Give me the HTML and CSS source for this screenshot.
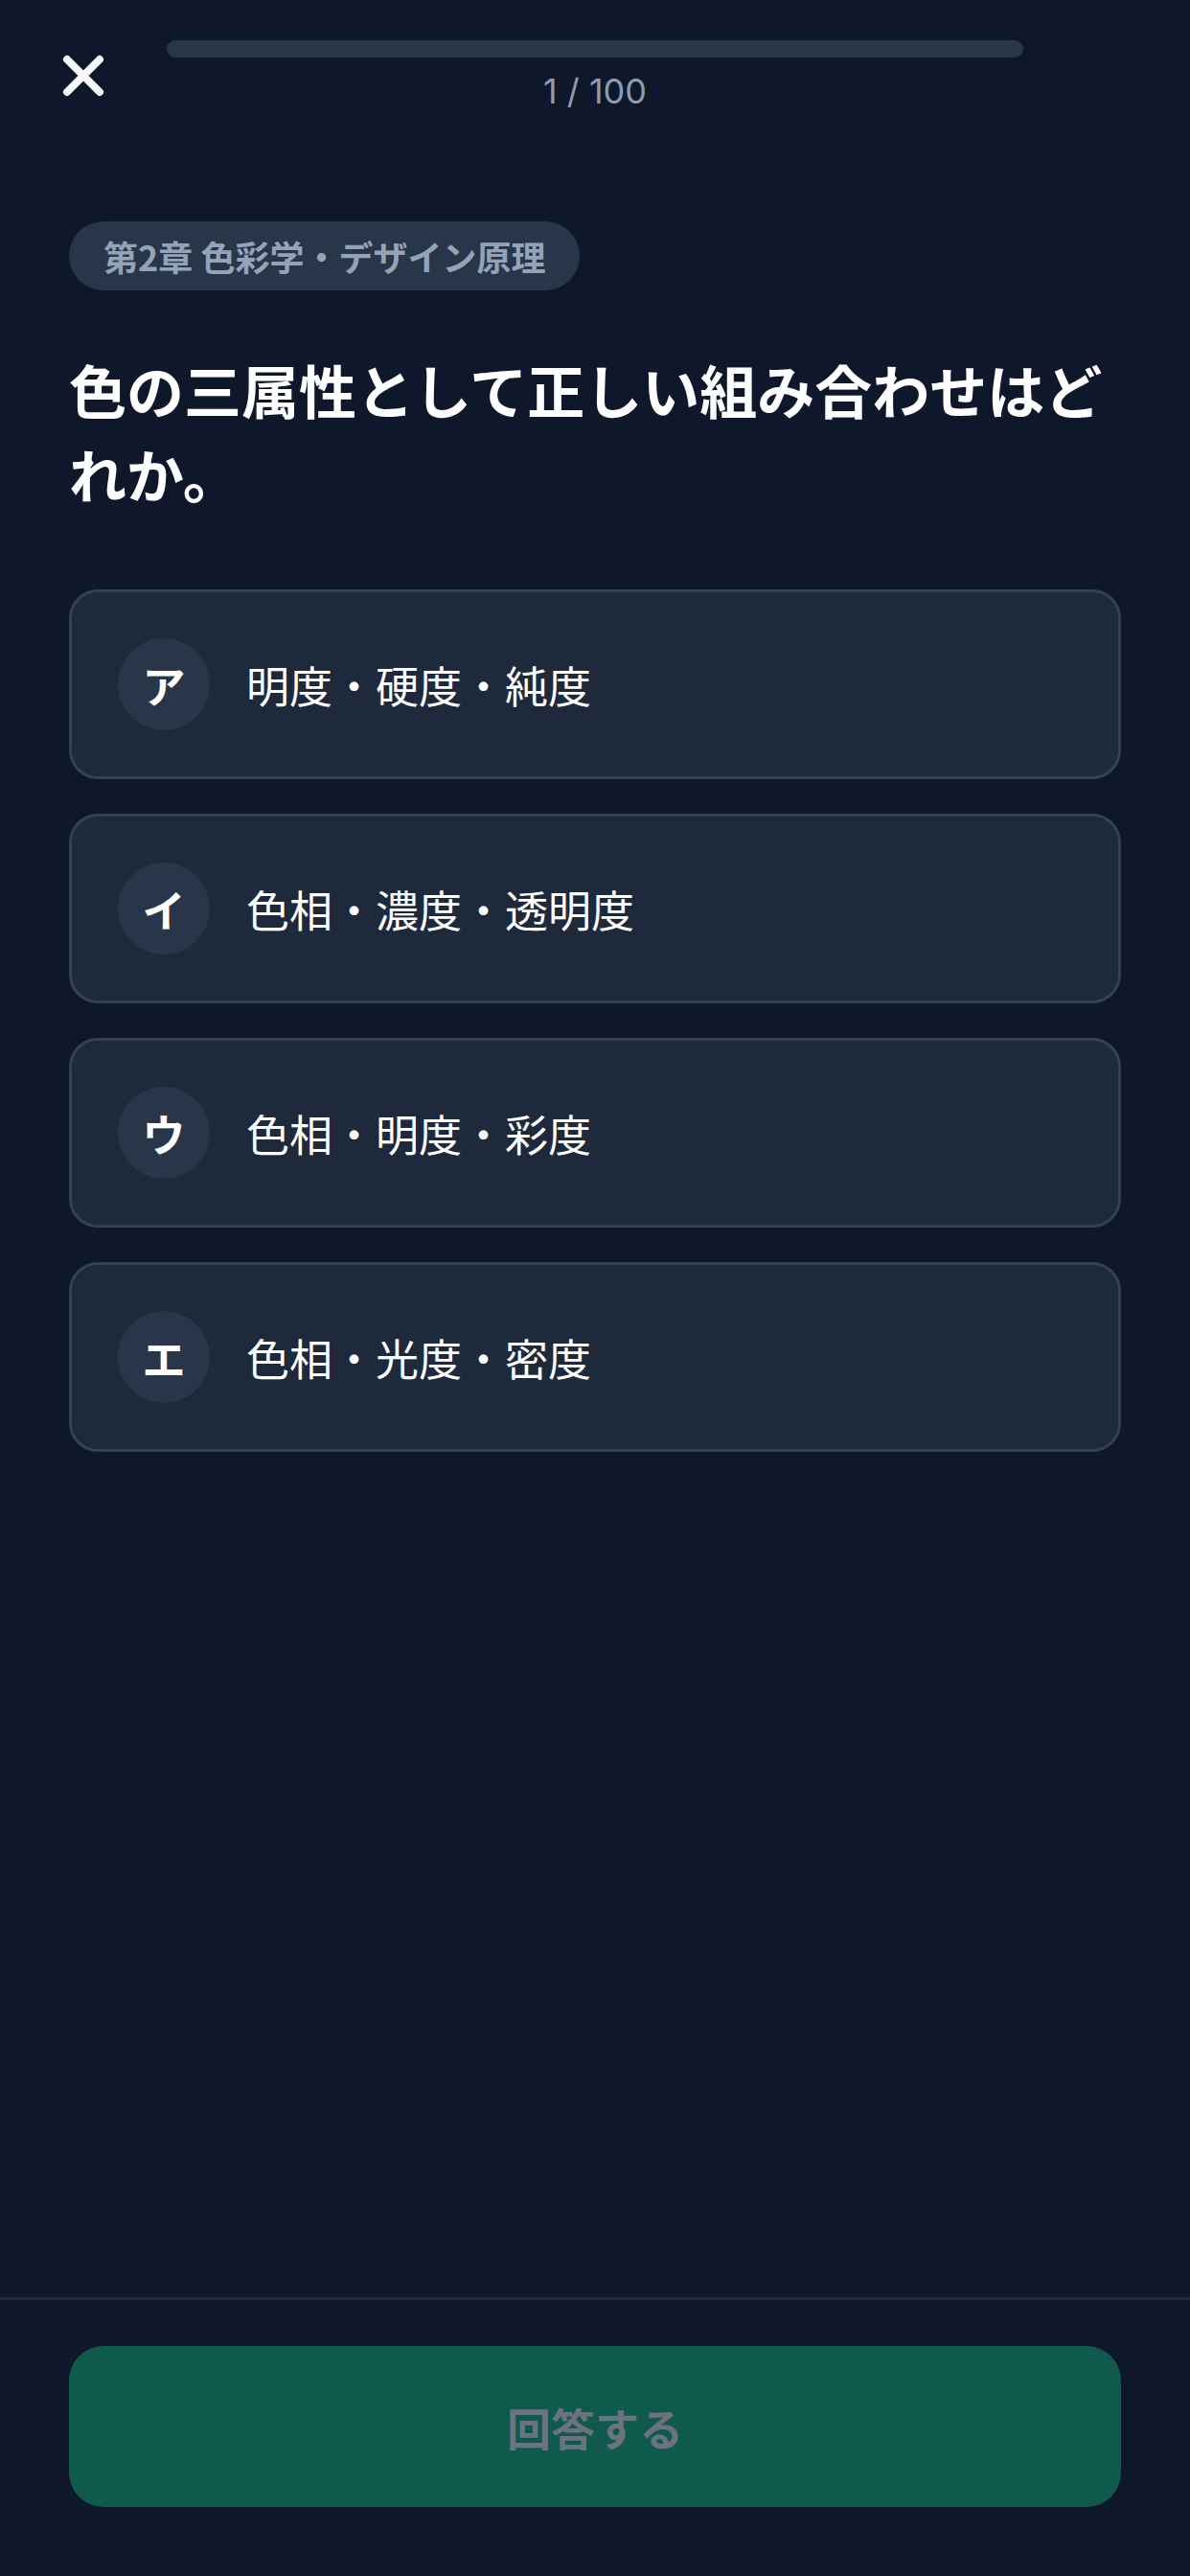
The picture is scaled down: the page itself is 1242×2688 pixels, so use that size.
FILE: index.html
```html
<!DOCTYPE html>
<html lang="ja">
<head>
<meta charset="utf-8">
<title>Quiz</title>
<link rel="stylesheet" href="styles.css">
</head>
<body>
<div class="screen">
  <header class="header">
    <button class="close" aria-label="閉じる">
      <svg width="48" height="48" viewBox="0 0 48 48"><path d="M7 7 L41 41 M41 7 L7 41" stroke="#f8fafc" stroke-width="8" stroke-linecap="round" fill="none"/></svg>
    </button>
    <div class="progress">
      <div class="track"></div>
      <div class="counter">1 / 100</div>
    </div>
    <div class="spacer"></div>
  </header>

  <main class="content">
    <div class="chip">第2章 色彩学・デザイン原理</div>
    <h1 class="question">色の三属性として正しい組み合わせはどれか。</h1>
    <div class="options">
      <div class="option"><span class="mark">ア</span><span class="label">明度・硬度・純度</span></div>
      <div class="option"><span class="mark">イ</span><span class="label">色相・濃度・透明度</span></div>
      <div class="option"><span class="mark">ウ</span><span class="label">色相・明度・彩度</span></div>
      <div class="option"><span class="mark">エ</span><span class="label">色相・光度・密度</span></div>
    </div>
  </main>

  <footer class="footer">
    <button class="submit">回答する</button>
  </footer>
</div>
</body>
</html>
```
FILE: styles.css
```css
* { box-sizing: border-box; }
html, body {
  margin: 0;
  padding: 0;
  background: #0f172a;
}
body {
  font-family: "Noto Sans CJK JP", "Noto Sans", sans-serif;
  color: #ffffff;
}
.screen {
  height: 2688px;
  display: flex;
  flex-direction: column;
}
.header {
  display: grid;
  grid-template-columns: 174px 1fr 174px;
  align-items: center;
  padding-top: 42px;
}
.close {
  justify-self: center;
  width: 48px;
  height: 48px;
  padding: 0;
  border: 0;
  background: none;
  display: flex;
}
.progress {
  display: flex;
  flex-direction: column;
  align-items: center;
}
.track {
  width: 100%;
  height: 18px;
  border-radius: 9px;
  background: #293548;
}
.counter {
  margin-top: 15px;
  font-family: "Inter", "Noto Sans", sans-serif;
  font-size: 36px;
  line-height: 40px;
  color: #8e9bb0;
}
.content {
  flex: 1;
  padding: 116px 72px 0;
}
.chip {
  display: inline-block;
  height: 72px;
  line-height: 72px;
  padding: 0 36px;
  border-radius: 36px;
  background: #293548;
  color: #94a3b8;
  font-size: 36px;
  font-weight: 700;
}
.question {
  margin: 59px 0 77px;
  font-size: 60px;
  line-height: 88px;
  font-weight: 700;
  color: #ffffff;
}
.options {
  display: flex;
  flex-direction: column;
  gap: 36px;
}
.option {
  display: flex;
  align-items: center;
  gap: 38px;
  padding: 48px 48px;
  background: #1e293b;
  border: 3px solid #334155;
  border-radius: 30px;
}
.mark {
  width: 96px;
  height: 96px;
  border-radius: 50%;
  background: #293548;
  display: flex;
  align-items: center;
  justify-content: center;
  font-size: 45px;
  font-weight: 700;
  color: #ffffff;
}
.label {
  font-size: 45px;
  color: #ffffff;
}
.footer {
  border-top: 3px solid #1e293b;
  padding: 48px 72px 72px;
}
.submit {
  width: 100%;
  height: 168px;
  border: 0;
  border-radius: 36px;
  background: #10594d;
  color: #6b7280;
  font-family: "Noto Sans CJK JP", "Noto Sans", sans-serif;
  font-size: 46px;
  font-weight: 700;
}
```
